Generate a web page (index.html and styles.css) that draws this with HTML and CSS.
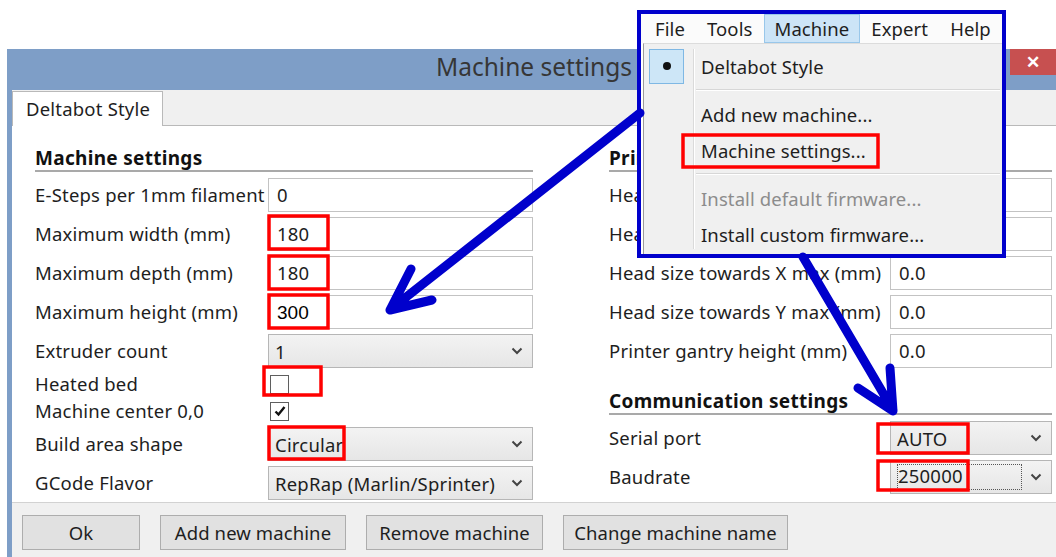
FILE: index.html
```html
<!DOCTYPE html>
<html lang="en">
<head>
<meta charset="utf-8">
<title>Machine settings</title>
<link rel="stylesheet" href="styles.css">
</head>
<body>
<div class="window">
  <div class="titlebar">
    <span></span>
    <span class="title">Machine settings</span>
    <span class="close">✕</span>
  </div>
  <div class="client">
    <div class="tabs"><div class="tab">Deltabot Style</div></div>
    <div class="page">
      <section class="col col-left">
        <h2 class="group">Machine settings</h2>
        <div class="form form-left">
          <label>E-Steps per 1mm filament</label><div class="edit">0</div>
          <label>Maximum width (mm)</label><div class="edit">180</div>
          <label>Maximum depth (mm)</label><div class="edit">180</div>
          <label>Maximum height (mm)</label><div class="edit"><span class="typed">300</span></div>
          <label>Extruder count</label><div class="combo"><span>1</span><svg class="chev" viewBox="0 0 12 8"><polyline points="1.5,1.5 6,6 10.5,1.5"/></svg></div>
          <label class="short">Heated bed</label><div class="short"><span class="check"></span></div>
          <label class="short">Machine center 0,0</label><div class="short"><span class="check on"><svg viewBox="0 0 14 14"><polyline points="2.5,7.5 5.5,10.5 11.5,3"/></svg></span></div>
          <label>Build area shape</label><div class="combo"><span>Circular</span><svg class="chev" viewBox="0 0 12 8"><polyline points="1.5,1.5 6,6 10.5,1.5"/></svg></div>
          <label>GCode Flavor</label><div class="combo"><span>RepRap (Marlin/Sprinter)</span><svg class="chev" viewBox="0 0 12 8"><polyline points="1.5,1.5 6,6 10.5,1.5"/></svg></div>
        </div>
      </section>
      <section class="col col-right">
        <h2 class="group">Printer head size</h2>
        <div class="form form-right">
          <label>Head size towards X min (mm)</label><div class="edit">0.0</div>
          <label>Head size towards Y min (mm)</label><div class="edit">0.0</div>
          <label>Head size towards X max (mm)</label><div class="edit">0.0</div>
          <label>Head size towards Y max (mm)</label><div class="edit">0.0</div>
          <label>Printer gantry height (mm)</label><div class="edit">0.0</div>
        </div>
        <h2 class="group group-comm">Communication settings</h2>
        <div class="form form-right">
          <label>Serial port</label><div class="combo"><span>AUTO</span><svg class="chev" viewBox="0 0 12 8"><polyline points="1.5,1.5 6,6 10.5,1.5"/></svg></div>
          <label>Baudrate</label><div class="combo"><span class="focus">250000</span><svg class="chev" viewBox="0 0 12 8"><polyline points="1.5,1.5 6,6 10.5,1.5"/></svg></div>
        </div>
      </section>
    </div>
    <div class="buttons">
      <button class="btn btn-ok">Ok</button>
      <button class="btn btn-add">Add new machine</button>
      <button class="btn btn-remove">Remove machine</button>
      <button class="btn btn-rename">Change machine name</button>
    </div>
  </div>
</div>

<div class="popup">
  <div class="menubar">
    <span class="mitem">File</span>
    <span class="mitem">Tools</span>
    <span class="mitem active">Machine</span>
    <span class="mitem">Expert</span>
    <span class="mitem">Help</span>
  </div>
  <div class="dropdown">
    <div class="ditem"><span class="icon"><span class="radio"><span class="dot"></span></span></span><span>Deltabot Style</span></div>
    <div class="dsep"></div>
    <div class="ditem"><span class="icon"></span><span>Add new machine...</span></div>
    <div class="ditem"><span class="icon"></span><span>Machine settings...</span></div>
    <div class="dsep"></div>
    <div class="ditem disabled"><span class="icon"></span><span>Install default firmware...</span></div>
    <div class="ditem"><span class="icon"></span><span>Install custom firmware...</span></div>
  </div>
</div>

<svg class="notes" width="1056" height="557" viewBox="0 0 1056 557">
  <g class="redbox">
    <rect x="269" y="216" width="59" height="33"/>
    <rect x="269" y="256" width="59" height="33"/>
    <rect x="269" y="295" width="59" height="33"/>
    <rect x="264" y="367" width="57" height="28"/>
    <rect x="269" y="427" width="75" height="32"/>
    <rect x="878" y="424" width="90" height="29"/>
    <rect x="878" y="461" width="90" height="29"/>
    <rect x="683" y="135" width="195" height="32"/>
  </g>
  <g class="arrow">
    <path d="M640 113 L391 309 M411 269 L390 310 L432 300"/>
    <path d="M803 257 L893 410 M890 368 L893 411 L858 388"/>
  </g>
</svg>
</body>
</html>
```

FILE: styles.css
```css
* { box-sizing: border-box; }

html, body {
  margin: 0;
  padding: 0;
  background: #ffffff;
}

body {
  width: 1056px;
  height: 557px;
  overflow: hidden;
  position: relative;
  font-family: "Noto Sans", "Open Sans", sans-serif;
  font-size: 18.5px;
  letter-spacing: 0.2px;
  color: #1e1e1e;
}

/* ---------- dialog window ---------- */
.window {
  margin: 49px 0 0 7px;
  width: 1054px;
  height: 508px;
  background: #7e9ec7;
  display: flex;
  flex-direction: column;
}

.titlebar {
  height: 41px;
  flex: none;
  display: grid;
  grid-template-columns: 1fr auto 1fr;
}

.title {
  font-size: 24.5px;
  letter-spacing: 0;
  color: #363636;
  line-height: 36px;
}

.close {
  justify-self: end;
  width: 47px;
  height: 26px;
  background: #c75050;
  color: #ffffff;
  font-size: 17px;
  font-weight: bold;
  line-height: 26px;
  text-align: center;
  margin-right: 4px;
}

.client {
  flex: 1;
  margin-left: 5px;
  background: #f0f0f0;
  display: flex;
  flex-direction: column;
}

/* ---------- tab strip ---------- */
.tabs {
  height: 36px;
  flex: none;
  border-bottom: 1px solid #b9b9b9;
  display: flex;
  align-items: flex-end;
}

.tab {
  height: 35px;
  margin-bottom: -1px;
  width: 151px;
  background: #ffffff;
  border: 1px solid #b9b9b9;
  border-bottom: none;
  padding-left: 13px;
  line-height: 33px;
}

/* ---------- page ---------- */
.page {
  height: 377px;
  flex: none;
  background: #ffffff;
  border-bottom: 1px solid #d2d2d2;
  display: flex;
  gap: 76px;
  padding: 20px 0 0 23px;
}

.col-left { width: 498px; }
.col-right { width: 443px; }

.group {
  margin: 0;
  height: 26px;
  font-size: 19px;
  font-weight: bold;
  letter-spacing: 0.3px;
  line-height: 24px;
  border-bottom: 2px solid #a9a9a9;
  color: #111;
  white-space: nowrap;
}

.group-comm { margin-top: 21px; }

.form {
  margin-top: 6px;
  display: grid;
  row-gap: 5px;
  align-items: center;
}

.form-left { grid-template-columns: 233px 265px; }
.form-right { grid-template-columns: 281px 162px; }

.form label {
  white-space: nowrap;
  line-height: 22px;
}

.edit {
  height: 34px;
  border: 1px solid #c3c3c3;
  background: #fff;
  padding-left: 8px;
  line-height: 31px;
}

.typed {
  font-family: "Liberation Sans", Arial, sans-serif;
  font-size: 19px;
  letter-spacing: 0;
  color: #000;
}

.combo {
  height: 34px;
  border: 1px solid #b6b6b6;
  background: linear-gradient(#f3f3f3, #e6e6e6);
  padding-left: 6px;
  padding-right: 9px;
  display: flex;
  align-items: center;
  justify-content: space-between;
}

.chev {
  width: 12px;
  height: 8px;
  fill: none;
  stroke: #444;
  stroke-width: 2;
}

.focus {
  width: 125px;
  height: 26px;
  line-height: 24px;
  outline: 1px dotted #555;
  outline-offset: -1px;
  padding-left: 1px;
}

.short {
  height: 22px;
  display: flex;
  align-items: center;
}

.check {
  width: 19px;
  height: 19px;
  border: 1px solid #5f5f5f;
  background: #fff;
  margin-left: 2px;
  display: flex;
  align-items: center;
  justify-content: center;
}

.check svg {
  width: 14px;
  height: 14px;
  fill: none;
  stroke: #111;
  stroke-width: 2.4;
}

/* ---------- button bar ---------- */
.buttons {
  flex: 1;
  display: flex;
  gap: 20px;
  padding: 12px 0 0 10px;
}

.btn {
  height: 35px;
  border: 1px solid #adadad;
  background: #e1e1e1;
  font-family: inherit;
  font-size: 18.5px;
  letter-spacing: 0.1px;
  color: #1e1e1e;
  padding: 0;
}

.btn-ok { width: 118px; }
.btn-add { width: 186px; }
.btn-remove { width: 177px; }
.btn-rename { width: 225px; }

/* ---------- menu popup ---------- */
.popup {
  position: absolute;
  left: 637px;
  top: 10px;
  width: 369px;
  height: 248px;
  border: 4px solid #0000cc;
  background: #ffffff;
  display: flex;
  flex-direction: column;
  letter-spacing: 0.1px;
}

.menubar {
  height: 29px;
  flex: none;
  display: flex;
  padding-left: 3px;
  background: #fbfbfb;
}

.mitem {
  padding: 0 10px;
  line-height: 27px;
  border: 1px solid transparent;
}

.mitem.active {
  background: #cce4f7;
  border-color: #99c7ea;
}

.dropdown {
  flex: 1;
  margin-left: 2px;
  border-left: 1px solid #9a9a9a;
  border-top: 1px solid #dcdcdc;
  background-color: #f0f0f0;
  background-image: linear-gradient(to right, transparent 49px, #dadada 49px, #dadada 50px, #ffffff 50px, #ffffff 51px, transparent 51px);
  background-repeat: no-repeat;
  background-size: 100% calc(100% - 10px);
  background-position: 0 5px;
  padding-top: 4px;
}

.ditem {
  height: 36px;
  display: flex;
  align-items: center;
  white-space: nowrap;
}

.ditem.disabled { color: #8c8c8c; }

.icon {
  width: 57px;
  height: 36px;
  flex: none;
  display: flex;
  align-items: center;
  padding-left: 5px;
}

.radio {
  width: 35px;
  height: 35px;
  background: #cde6f7;
  border: 1px solid #7fb8e4;
  display: flex;
  align-items: center;
  justify-content: center;
}

.dot {
  width: 8px;
  height: 8px;
  border-radius: 50%;
  background: #111;
}

.dsep {
  height: 12px;
  margin: 0 2px 0 52px;
  display: flex;
  flex-direction: column;
  justify-content: center;
}

.dsep::before {
  content: "";
  display: block;
  height: 1px;
  background: #d7d7d7;
  border-bottom: 1px solid #ffffff;
  box-sizing: content-box;
}

/* ---------- annotations ---------- */
.notes {
  position: absolute;
  left: 0;
  top: 0;
  pointer-events: none;
}

.redbox rect {
  fill: none;
  stroke: #ff0000;
  stroke-width: 3.5;
}

.arrow path {
  fill: none;
  stroke: #0000cc;
  stroke-width: 9;
  stroke-linecap: round;
  stroke-linejoin: round;
}
```
